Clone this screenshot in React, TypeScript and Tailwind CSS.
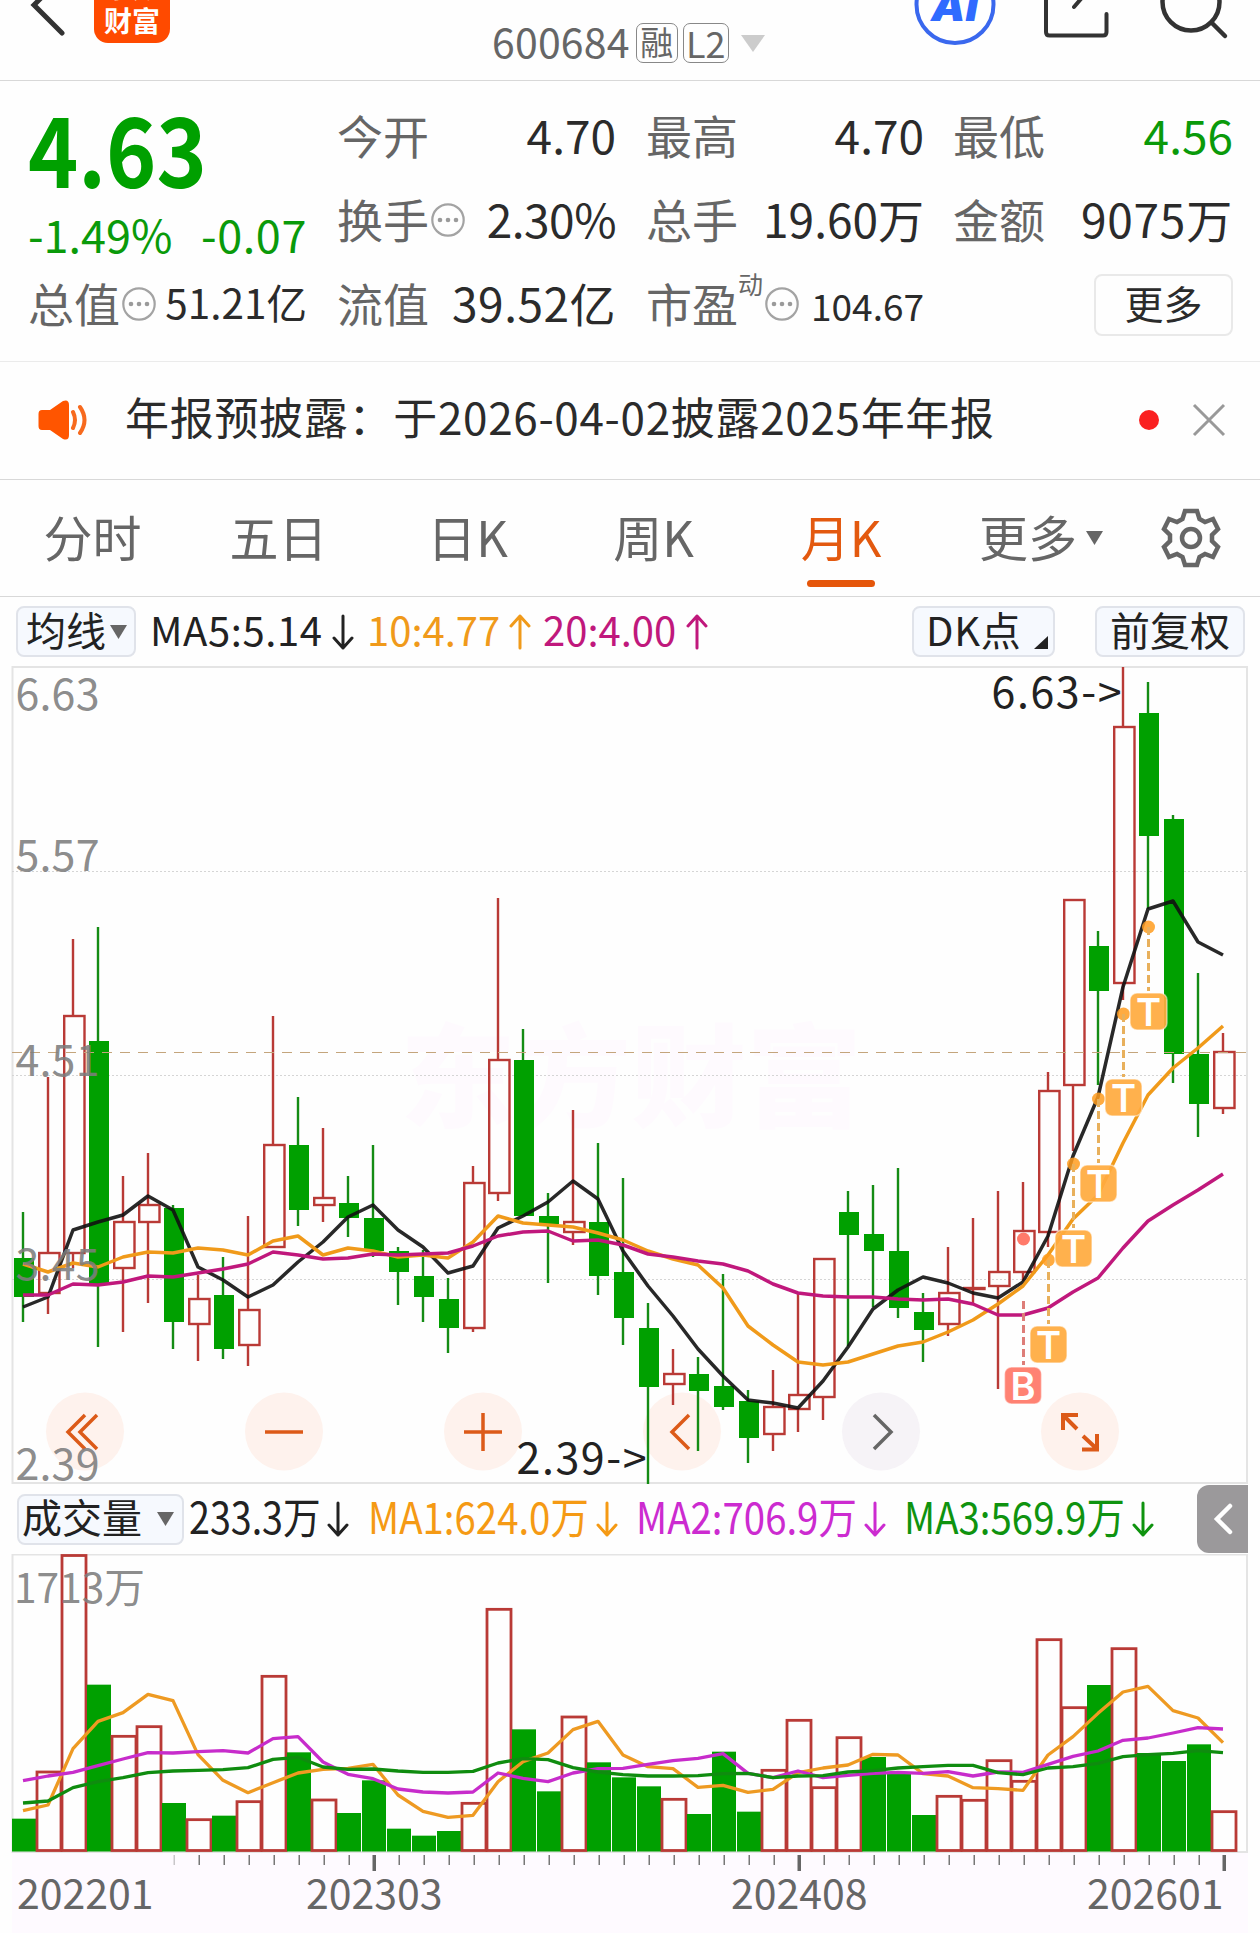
import type { ReactNode } from 'react';

// Candle columns: 49 months, 25px apart
const STEP = 25;
const cx = (i: number) => 23 + STEP * i;

// [up, high, bodyTop, bodyBottom, low]
const candles: [number, number, number, number, number][] = [
  [0, 1212, 1258, 1297, 1322],
  [1, 1077, 1253, 1293, 1314],
  [1, 939, 1016, 1253, 1268],
  [0, 927, 1041, 1284, 1347],
  [1, 1176, 1222, 1268, 1332],
  [1, 1153, 1205, 1222, 1303],
  [0, 1205, 1208, 1322, 1349],
  [1, 1275, 1299, 1324, 1361],
  [0, 1257, 1295, 1349, 1359],
  [1, 1216, 1310, 1345, 1366],
  [1, 1016, 1145, 1247, 1247],
  [0, 1097, 1145, 1210, 1226],
  [1, 1128, 1198, 1205, 1222],
  [0, 1176, 1203, 1218, 1237],
  [0, 1145, 1218, 1251, 1257],
  [0, 1247, 1251, 1272, 1305],
  [0, 1250, 1276, 1297, 1322],
  [0, 1278, 1299, 1328, 1353],
  [1, 1166, 1183, 1328, 1332],
  [1, 898, 1060, 1193, 1201],
  [0, 1029, 1060, 1216, 1216],
  [0, 1193, 1216, 1224, 1283],
  [1, 1110, 1222, 1232, 1245],
  [0, 1143, 1222, 1276, 1295],
  [0, 1178, 1272, 1318, 1345],
  [0, 1303, 1328, 1387, 1484],
  [1, 1349, 1374, 1384, 1405],
  [0, 1357, 1374, 1391, 1451],
  [0, 1274, 1386, 1407, 1410],
  [0, 1390, 1401, 1438, 1463],
  [1, 1370, 1407, 1434, 1451],
  [1, 1293, 1395, 1409, 1432],
  [1, 1259, 1259, 1397, 1420],
  [0, 1191, 1212, 1235, 1346],
  [0, 1185, 1234, 1251, 1307],
  [0, 1168, 1251, 1308, 1318],
  [0, 1293, 1312, 1330, 1362],
  [1, 1247, 1293, 1324, 1336],
  [1, 1218, 1288, 1289, 1304],
  [1, 1191, 1272, 1286, 1389],
  [1, 1182, 1231, 1272, 1281],
  [1, 1072, 1091, 1232, 1247],
  [1, 900, 900, 1085, 1151],
  [0, 931, 946, 991, 1085],
  [1, 667, 727, 983, 1000],
  [0, 682, 713, 836, 909],
  [0, 815, 819, 1054, 1083],
  [0, 973, 1054, 1104, 1137],
  [1, 1033, 1052, 1108, 1114],
];

const ma5 = [
  1307, 1297, 1230, 1222, 1215, 1196, 1210, 1267, 1280, 1297, 1285, 1262, 1242, 1217, 1205, 1230, 1247, 1273, 1266,
  1228, 1216, 1202, 1181, 1199, 1251, 1286, 1316, 1349, 1376, 1400, 1403, 1408, 1381, 1347, 1309, 1290, 1277, 1283,
  1293, 1298, 1282, 1236, 1156, 1097, 987, 909, 901, 942, 955,
];
const ma10 = [
  1264, 1272, 1263, 1267, 1257, 1252, 1253, 1248, 1250, 1255, 1241, 1236, 1255, 1248, 1251, 1257, 1255, 1258, 1242,
  1216, 1223, 1225, 1227, 1233, 1240, 1251, 1259, 1265, 1288, 1326, 1345, 1362, 1365, 1362, 1354, 1346, 1342, 1332,
  1320, 1304, 1286, 1255, 1219, 1195, 1143, 1095, 1068, 1048, 1026,
];
const ma20 = [
  1295, 1295, 1284, 1285, 1282, 1276, 1277, 1273, 1269, 1264, 1252, 1255, 1259, 1258, 1254, 1255, 1254, 1253, 1246,
  1236, 1232, 1231, 1241, 1240, 1245, 1254, 1257, 1261, 1264, 1271, 1284, 1293, 1296, 1297, 1297, 1299, 1300, 1299,
  1304, 1315, 1315, 1308, 1292, 1278, 1248, 1221, 1205, 1190, 1174,
];

// Volume pane, stored at 3 units per pixel
const vy = (v: number) => v / 3 - 74;
const volumes: [number, number][] = [
  [0, 1016], [1, 876], [1, 226], [0, 614], [1, 769], [1, 740], [0, 969], [1, 1019], [0, 1007], [1, 965],
  [1, 589], [0, 817], [1, 960], [0, 999], [0, 901], [0, 1046], [0, 1067], [0, 1053], [1, 970], [1, 388],
  [0, 748], [0, 934], [1, 711], [0, 847], [0, 892], [0, 919], [1, 958], [0, 1002], [0, 815], [0, 995],
  [1, 871], [1, 721], [1, 923], [1, 773], [0, 831], [0, 882], [0, 1005], [1, 949], [1, 961], [1, 842],
  [1, 904], [1, 479], [1, 683], [0, 615], [1, 506], [0, 819], [0, 843], [0, 793], [1, 995],
];
const vma1 = [
  992, 975, 806, 724, 698, 643, 662, 824, 901, 938, 908, 879, 868, 865, 853, 945, 994, 1012, 1006, 905, 845, 819, 749,
  724, 825, 860, 866, 922, 916, 937, 928, 878, 864, 855, 823, 825, 881, 888, 923, 926, 931, 825, 770, 700, 636, 619,
  692, 714, 788,
];
const vma2 = [
  902, 888, 877, 857, 837, 818, 819, 815, 812, 819, 776, 770, 846, 883, 896, 927, 936, 939, 936, 879, 895, 905, 879,
  866, 865, 853, 842, 835, 821, 880, 893, 873, 893, 886, 880, 877, 880, 875, 888, 876, 877, 853, 829, 813, 781, 774,
  759, 743, 747,
];
const vma3 = [
  969, 963, 923, 905, 893, 878, 873, 871, 869, 863, 838, 832, 861, 868, 867, 873, 877, 877, 874, 849, 836, 839, 863,
  876, 884, 888, 888, 887, 881, 880, 893, 888, 887, 876, 872, 864, 860, 856, 856, 878, 884, 864, 860, 850, 830, 824,
  820, 812, 818,
];

const line = (ys: number[]) => ys.map((y, i) => `${cx(i)},${y}`).join(' ');

const RED = '#b93a36';
const GREEN = '#00a000';

const MoreDots = () => (
  <svg className="ml-[2px] mt-[3px] w-[34px] h-[34px] shrink-0" viewBox="0 0 34 34">
    <circle cx="17" cy="17" r="15.7" fill="none" stroke="#a3a3a3" strokeWidth="2.2" />
    <circle cx="9" cy="17" r="2.3" fill="#9a9a9a" />
    <circle cx="17" cy="17" r="2.3" fill="#9a9a9a" />
    <circle cx="25" cy="17" r="2.3" fill="#9a9a9a" />
  </svg>
);

const Caret = ({ color = '#666' }: { color?: string }) => (
  <svg className="w-[17px] h-[14px] shrink-0" viewBox="0 0 17 14">
    <path d="M0 0H17L8.5 14Z" fill={color} />
  </svg>
);

const Arrow = ({ up }: { up?: boolean }) => (
  <svg
    className="w-[22px] h-[36px] shrink-0"
    viewBox="0 0 22 36"
    fill="none"
    stroke="currentColor"
    strokeWidth="3"
    strokeLinecap="round"
    strokeLinejoin="round"
  >
    <path d={up ? 'M11 34V2M2 12L11 2L20 12' : 'M11 2V34M2 24L11 34L20 24'} />
  </svg>
);

const Cell = ({ label, children }: { label: ReactNode; children: ReactNode }) => (
  <div className="flex h-[84px] items-center justify-between pb-[5px] whitespace-nowrap">
    <div className="flex items-center text-[46px] text-[#666]">{label}</div>
    <div className="text-[46px] text-[#2b2b2b]">{children}</div>
  </div>
);

const Header = () => (
  <header className="flex h-[81px] items-start border-b border-[#d8d8d8]">
    <svg className="ml-[30px] h-[40px] w-[40px]" viewBox="0 0 40 40">
      <path d="M31 -22L4 5L32 33" fill="none" stroke="#333" strokeWidth="5" strokeLinecap="round" />
    </svg>
    <div className="ml-[24px] flex h-[43px] w-[76px] flex-col items-center justify-end overflow-hidden rounded-b-[14px] bg-[#ff4a00] pb-[6px] text-[28px] leading-[34px] font-bold text-white">
      <span>东方</span>
      <span>财富</span>
    </div>
    <div className="ml-[322px] mt-[13px] flex h-[60px] w-[274px] items-center whitespace-nowrap text-[#666]">
      <span className="pb-[4px] text-[41px] tracking-[0.2px]">600684</span>
      <span className="ml-[6px] flex h-[40px] w-[42px] items-center justify-center rounded-[7px] border border-[#888] pb-[3px] text-[33px]">
        融
      </span>
      <span className="ml-[5px] flex h-[40px] w-[46px] items-center justify-center rounded-[7px] border border-[#888] pb-[3px] text-[36px]">
        L2
      </span>
      <svg className="ml-[12px] h-[17px] w-[24px]" viewBox="0 0 24 17">
        <path d="M0 0H24L12 17Z" fill="#ccc" />
      </svg>
    </div>
    <svg className="ml-[147px] h-[50px] w-[84px]" viewBox="913 0 84 50">
      <circle cx="955" cy="4.5" r="38.5" fill="#fff" stroke="#3a68ee" strokeWidth="4" />
      <text x="931" y="21" fontFamily="Inter, sans-serif" fontWeight="900" fontStyle="italic" fontSize="40" fill="#2f6bff" textLength="47" lengthAdjust="spacingAndGlyphs">
        AI
      </text>
    </svg>
    <svg className="ml-[43px] h-[42px] w-[72px]" viewBox="1040 0 72 42" fill="none" stroke="#333" strokeWidth="4" strokeLinecap="round" strokeLinejoin="round">
      <path d="M1046 -10V32Q1046 35.500 1049.500 35.500H1103Q1106.500 35.500 1106.500 32V14M1074 7L1092 -14" />
    </svg>
    <svg className="ml-[43px] h-[42px] w-[76px]" viewBox="1155 0 76 42" fill="none" stroke="#333" strokeWidth="4.500" strokeLinecap="round">
      <circle cx="1191" cy="2" r="28.5" />
      <path d="M1212 23L1225 36" />
    </svg>
  </header>
);

const Quote = () => (
  <section className="flex h-[281px] border-b border-[#ebebeb] pl-[28px] pt-[14px]">
    <div className="w-[279px]">
      <div className="flex h-[112px] items-end pb-[5px]">
        <div className="w-[200px] origin-left scale-x-[0.88] text-[97px] leading-[112px] font-bold text-[#00a000]">4.63</div>
      </div>
      <div className="flex h-[56px] items-center justify-between whitespace-nowrap text-[45px] text-[#0a9a0a]">
        <span className="pb-[3px]">-1.49%</span>
        <span className="pb-[3px] tracking-[0.6px]">-0.07</span>
      </div>
      <div className="flex h-[84px] items-center justify-between pb-[5px] whitespace-nowrap">
        <div className="flex items-center text-[46px] text-[#666]">
          总值
          <MoreDots />
        </div>
        <div className="text-[40.5px] text-[#2b2b2b]">51.21亿</div>
      </div>
    </div>
    <div className="ml-[30px] w-[279px]">
      <Cell label="今开">4.70</Cell>
      <Cell label={<>换手<MoreDots /></>}>
        <span className="tracking-[-0.5px]">2.30%</span>
      </Cell>
      <Cell label="流值">
        <span className="tracking-[0.5px]">39.52亿</span>
      </Cell>
    </div>
    <div className="ml-[30px] w-[278px]">
      <Cell label="最高">4.70</Cell>
      <Cell label="总手">19.60万</Cell>
      <Cell label={<>市盈<span className="-mt-[38px] text-[25px]">动</span><MoreDots /></>}>
        <span className="inline-block pb-[4px] text-[37px]">104.67</span>
      </Cell>
    </div>
    <div className="ml-[29px] w-[280px]">
      <Cell label="最低">
        <span className="text-[#0a9a0a]">4.56</span>
      </Cell>
      <Cell label="金额">
        <span className="tracking-[0.8px]">9075万</span>
      </Cell>
      <div className="flex h-[84px] items-center justify-end">
        <button className="h-[62px] w-[139px] rounded-[8px] border-2 border-[#e9e9e9] pb-[7px] text-[39px] leading-[50px] text-[#2b2b2b]">
          更多
        </button>
      </div>
    </div>
  </section>
);

const Notice = () => (
  <section className="flex h-[118px] items-center border-b border-[#d8d8d8] pb-[2px] pl-[38px]">
    <svg className="h-[40px] w-[50px]" viewBox="0 0 50 40">
      <path d="M4 10H12L25 1Q31 -1 31 5V35Q31 41 25 39L12 30H4Q0.500 30 0.500 26V14Q0.500 10 4 10Z" fill="#ff5500" />
      <path d="M35 12Q39 20 35 28M42 7Q51 20 42 33" fill="none" stroke="#f76a1e" strokeWidth="4" strokeLinecap="round" />
    </svg>
    <p className="ml-[37px] w-[1014px] pb-[7px] whitespace-nowrap text-[44px] tracking-[0.7px] text-[#2b2b2b]">
      年报预披露：于2026-04-02披露2025年年报
    </p>
    <span className="h-[20px] w-[20px] rounded-full bg-[#fa2020]" />
    <svg className="ml-[33px] h-[34px] w-[34px]" viewBox="0 0 34 34">
      <path d="M2 2L32 32M32 2L2 32" stroke="#999" strokeWidth="3" />
    </svg>
  </section>
);

const tabs = [
  { name: '分时', width: 'w-[185px]' },
  { name: '五日', width: 'w-[187px]' },
  { name: '日K', width: 'w-[191px]' },
  { name: '周K', width: 'w-[181px]' },
  { name: '月K', width: 'w-[194px]', active: true },
];

const Tabs = () => (
  <nav className="flex h-[117px] items-center border-b border-[#d8d8d8] text-[49px] text-[#666]">
    {tabs.map((t) => (
      <div key={t.name} className={`relative flex h-full items-center justify-center ${t.width} ${t.active ? 'text-[#e3590f]' : ''}`}>
        <span className="pb-[4px]">{t.name}</span>
        {t.active && <span className="absolute bottom-[9px] left-[63px] h-[7px] w-[68px] rounded-full bg-[#e5560a]" />}
      </div>
    ))}
    <div className="ml-[41px] flex w-[127px] items-center gap-[9px] whitespace-nowrap">
      <span className="pb-[4px]">更多</span>
      <Caret />
    </div>
    <svg className="ml-[55px] h-[60px] w-[60px]" viewBox="-30 -30 60 60" fill="none" stroke="#666" strokeWidth="4.500">
      <path d="M-6 -27H6L8.500 -19L14 -16L22 -19L27 -9L21 -3V3L27 9L22 19L14 16L8.500 19L6 27H-6L-8.500 19L-14 16L-22 19L-27 9L-21 3V-3L-27 -9L-22 -19L-14 -16L-8.500 -19Z" />
      <circle r="9" />
    </svg>
  </nav>
);

const AverageBar = () => (
  <section className="flex h-[69px] items-center whitespace-nowrap pl-[16px] text-[40px] text-[#222]">
    <button className="flex h-[51px] w-[120px] items-center gap-[4px] rounded-[8px] border-2 border-[#e0e3ea] bg-[#f6f9fe] pl-[8px]">
      <span className="pb-[5px] leading-[42px]">均线</span>
      <Caret />
    </button>
    <div className="ml-[14px] flex w-[217px] items-center justify-between pr-[13px]">
      <span className="pb-[5px] tracking-[0.6px]">MA5:5.14</span>
      <Arrow />
    </div>
    <div className="flex w-[176px] items-center justify-between pr-[12px] text-[#f09a1a]">
      <span className="pb-[5px]">10:4.77</span>
      <Arrow up />
    </div>
    <div className="flex w-[165px] items-center justify-between text-[#c0187c]">
      <span className="pb-[5px]">20:4.00</span>
      <Arrow up />
    </div>
    <button className="ml-[204px] flex h-[51px] w-[143px] items-center justify-between rounded-[8px] border-2 border-[#e0e3ea] bg-[#f6f9fe] pl-[12px] pr-[5px]">
      <span className="pb-[5px] leading-[42px] tracking-[0.7px]">DK点</span>
      <svg className="mt-[22px] h-[13px] w-[14px]" viewBox="0 0 14 13">
        <path d="M14 0V13H0Z" fill="#222" />
      </svg>
    </button>
    <button className="ml-[40px] h-[51px] w-[150px] rounded-[8px] border-2 border-[#e0e3ea] bg-[#f6f9fe] pb-[6px] leading-[40px]">
      前复权
    </button>
  </section>
);

const Badge = ({ x, y, letter, color }: { x: number; y: number; letter: string; color: string }) => (
  <g>
    <rect x={x} y={y} width="37" height="37" rx="7" fill={color} fillOpacity="0.93" stroke="#fff" strokeOpacity="0.5" strokeWidth="1.500" />
    <text x={x + 18.5} y={y + 33} textAnchor="middle" fontFamily="Inter, sans-serif" fontWeight="600" fontSize="38" fill="#fff">
      {letter}
    </text>
  </g>
);

// [x, dot y, badge y]
const tMarks = [
  [1048.5, 1260, 1326],
  [1073.5, 1164, 1230],
  [1098.5, 1099, 1165],
  [1123.5, 1014, 1079],
  [1148.5, 927, 993],
];

const priceLabels = [
  { text: '6.63', y: 710 },
  { text: '5.57', y: 871 },
  { text: '4.51', y: 1076 },
  { text: '3.45', y: 1280 },
  { text: '2.39', y: 1480 },
];

const PriceChart = () => (
  <svg className="block h-[818px] w-[1260px]" viewBox="0 666 1260 818">
    <path d="M12.500 667H1247V1483H12.500Z" fill="none" stroke="#e4e4e4" strokeWidth="2" />
    <text x="400" y="1119" fontSize="112" fontWeight="900" fill="#fefafe" textLength="462" lengthAdjust="spacingAndGlyphs">
      东方财富
    </text>
    {[871.5, 1075.5, 1279.5].map((y) => (
      <path key={y} d={`M12 ${y}H1247`} stroke="#d5d5d5" strokeDasharray="2 2" />
    ))}

    {/* Chart controls */}
    {[85, 284, 483, 682, 881, 1080].map((x) => (
      <circle key={x} cx={x} cy="1431.500" r="39" fill={x === 881 ? '#f6f3f7' : '#fef2ed'} />
    ))}
    <g fill="none" stroke="#dc5a18" strokeWidth="3.500">
      <path d="M85 1415L68 1432L85 1449M97 1415L80 1432L97 1449" />
      <path d="M265 1432H303" />
      <path d="M464 1432H502M483 1413V1451" />
      <path d="M689 1415L672 1432L689 1449" />
      <path d="M874 1415L891 1432L874 1449" stroke="#666" />
      <path d="M1077 1429L1063 1415M1063 1430V1415H1078M1083 1436L1097 1449M1097 1434V1449.500H1082" strokeWidth="4" />
    </g>

    {candles.map(([up, high, top, bottom, low], i) => {
      const x = cx(i);
      return up ? (
        <g key={i} stroke={RED} strokeWidth="2.400" fill="none">
          <path d={`M${x} ${high}V${top}M${x} ${bottom}V${low}`} />
          <rect x={x - 8.8} y={top} width="20.300" height={bottom - top} />
        </g>
      ) : (
        <g key={i} fill={GREEN}>
          <rect x={x - 1.2} y={high} width="2.400" height={low - high} fill="#148c14" />
          <rect x={x - 9} y={top} width="20" height={bottom - top} />
        </g>
      );
    })}
    <path d="M12 1052.500H1247" stroke="#c4a57c" strokeDasharray="10 8" />

    <g fill="none" strokeWidth="3.500" strokeLinejoin="round">
      <polyline points={line(ma5)} stroke="#111" strokeOpacity="0.9" />
      <polyline points={line(ma10)} stroke="#f09a1a" />
      <polyline points={line(ma20)} stroke="#c0187c" />
    </g>

    {tMarks.map(([x, dot, badge]) => (
      <g key={x}>
        <circle cx={x} cy={dot} r="6.500" fill="#ff9c1f" fillOpacity="0.85" />
        <path d={`M${x} ${dot}V${badge - 2}`} stroke="#e8b05c" strokeWidth="3" strokeDasharray="8 4" />
        <Badge x={x - 18.5} y={badge} letter="T" color="#ffab40" />
      </g>
    ))}
    <circle cx="1023.500" cy="1239" r="6.500" fill="#ff7a6a" />
    <path d="M1023.500 1301V1365" stroke="#dd7d78" strokeWidth="3" strokeDasharray="8 4" />
    <Badge x={1004.5} y={1367} letter="B" color="#ff7868" />

    {priceLabels.map((l) => (
      <text key={l.text} x="15.500" y={l.y} fontSize="43" fill="#7d7d7d" fillOpacity="0.9" textLength="84">
        {l.text}
      </text>
    ))}
    <text x="991.500" y="708" fontSize="43" fill="#222" textLength="130">
      {'6.63->'}
    </text>
    <text x="516.500" y="1474" fontSize="43" fill="#222" textLength="130">
      {'2.39->'}
    </text>
  </svg>
);

const VolumeBar = () => (
  <section className="flex h-[70px] items-center whitespace-nowrap pl-[17px] text-[40px] text-[#222]">
    <button className="flex h-[51px] w-[167px] items-center gap-[15px] rounded-[8px] border-2 border-[#e0e3ea] bg-[#f6f9fe] pl-[3px]">
      <span className="pb-[6px] leading-[41px]">成交量</span>
      <Caret />
    </button>
    <div className="ml-[5px] flex w-[160px] items-center justify-between">
      <span className="w-[130px] origin-left scale-x-[0.875] pb-[7px] text-[43px]">233.3万</span>
      <Arrow />
    </div>
    <div className="ml-[19px] flex w-[250px] items-center justify-between text-[#f59a14]">
      <span className="w-[216px] origin-left scale-x-[0.893] pb-[7px] text-[43px]">MA1:624.0万</span>
      <Arrow />
    </div>
    <div className="ml-[18px] flex w-[250px] items-center justify-between text-[#cc2bd0]">
      <span className="w-[216px] origin-left scale-x-[0.893] pb-[7px] text-[43px]">MA2:706.9万</span>
      <Arrow />
    </div>
    <div className="ml-[18px] flex w-[250px] items-center justify-between text-[#0f930f]">
      <span className="w-[216px] origin-left scale-x-[0.893] pb-[7px] text-[43px]">MA3:569.9万</span>
      <Arrow />
    </div>
    <div className="ml-[43px] flex h-[68px] w-[51px] items-center justify-center rounded-l-[12px] bg-[#9b999b]">
      <svg className="h-[34px] w-[20px]" viewBox="0 0 20 34">
        <path d="M17 4L4 17L17 30" fill="none" stroke="#fff" strokeWidth="4.500" strokeLinecap="round" />
      </svg>
    </div>
  </section>
);

const VolumeChart = () => (
  <svg className="block h-[299px] w-[1260px]" viewBox="0 0 1260 299">
    <path d="M12.500 0.500H1247V298H12.500Z" fill="none" stroke="#e4e4e4" strokeWidth="2" />
    {volumes.map(([up, v], i) =>
      up ? (
        <rect key={i} x={cx(i) - 11} y={Math.max(vy(v), 1.5)} width="24" height={296.5 - Math.max(vy(v), 1.5)} fill="none" stroke={RED} strokeWidth="2.800" />
      ) : (
        <rect key={i} x={cx(i) - 11} y={vy(v)} width="24" height={297.5 - vy(v)} fill={GREEN} />
      ),
    )}
    <g fill="none" strokeWidth="3.300" strokeLinejoin="round">
      <polyline points={line(vma1.map(vy))} stroke="#ee9a22" />
      <polyline points={line(vma2.map(vy))} stroke="#c72ccb" />
      <polyline points={line(vma3.map(vy))} stroke="#0f8c0f" />
    </g>
    <text x="14" y="49" fontSize="41" fill="#7d7d7d" fillOpacity="0.9" textLength="131" lengthAdjust="spacingAndGlyphs">
      1713万
    </text>
  </svg>
);

const ticks = Array.from({ length: 43 }, (_, k) => k + 6);

const TimeAxis = () => (
  <section className="ml-[12px] h-[80px] w-[1236px] bg-[#fefaff]">
    <svg className="block h-[18px] w-[1236px]" viewBox="12 0 1236 18">
      {ticks.map((i) => {
        const major = i === 14 || i === 31 || i === 48;
        return (
          <rect
            key={i}
            x={cx(i) + (major ? -0.5 : 0.5)}
            y="2"
            width={major ? 3.5 : 1.5}
            height={major ? 16 : 10}
            fill={major ? '#666' : '#777'}
            opacity={i === 6 ? 0.4 : 1}
          />
        );
      })}
    </svg>
    <div className="-mt-[3px] flex pl-[5px] text-[41px] leading-[46px] text-[#666]">
      <span className="w-[289px]">202201</span>
      <span className="w-[425px]">202303</span>
      <span className="w-[356px]">202408</span>
      <span>202601</span>
    </div>
  </section>
);

const App = () => (
  <main className="h-[1933px] w-[1260px] overflow-hidden bg-[#fefefe] font-['Noto_Sans_CJK_SC',sans-serif]">
    <Header />
    <Quote />
    <Notice />
    <Tabs />
    <AverageBar />
    <PriceChart />
    <VolumeBar />
    <VolumeChart />
    <TimeAxis />
  </main>
);

export default App;
